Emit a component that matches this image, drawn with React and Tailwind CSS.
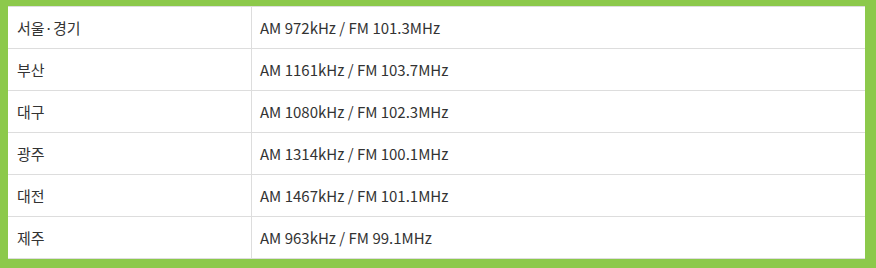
const rows = [
  ["서울·경기", "AM 972kHz / FM 101.3MHz"],
  ["부산", "AM 1161kHz / FM 103.7MHz"],
  ["대구", "AM 1080kHz / FM 102.3MHz"],
  ["광주", "AM 1314kHz / FM 100.1MHz"],
  ["대전", "AM 1467kHz / FM 101.1MHz"],
  ["제주", "AM 963kHz / FM 99.1MHz"],
];

export default function App() {
  return (
    <div className="h-[268px] w-[876px] bg-[#8cc94b] pt-[6px] pl-[8px] pr-[11px] pb-[9px]">
      <div
        className="border-t border-[#dddddd] bg-white text-[15px] text-[#333333]"
        style={{ fontFamily: '"Noto Sans CJK KR", "Noto Sans", sans-serif' }}
      >
        {rows.map(([city, freq]) => (
          <div key={city} className="flex h-[42px] border-b border-[#dddddd]">
            <div className="flex w-[244px] items-center border-r border-[#dddddd] pl-[9px] pt-[1px]">
              {city}
            </div>
            <div className="flex flex-1 items-center pl-[8px] pt-[1px]">{freq}</div>
          </div>
        ))}
      </div>
    </div>
  );
}
